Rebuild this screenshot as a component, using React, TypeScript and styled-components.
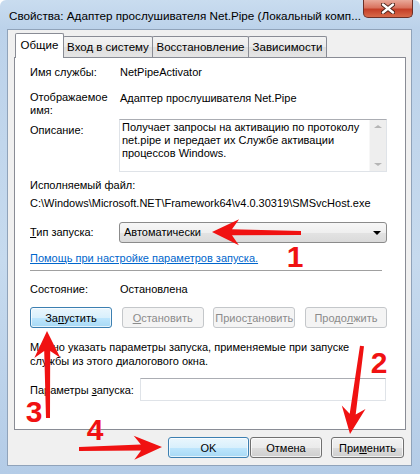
import React from 'react';
import styled, { createGlobalStyle } from 'styled-components';

const GlobalStyle = createGlobalStyle`
  html, body {
    margin: 0;
    padding: 0;
  }
  body {
    width: 420px;
    height: 474px;
    overflow: hidden;
    font-family: 'Liberation Sans', Arial, sans-serif;
    font-size: 11px;
    color: #000;
  }
`;

const Window = styled.div`
  position: relative;
  width: 420px;
  height: 474px;
  box-sizing: border-box;
  padding: 0 8px 8px 7px;
  display: flex;
  flex-direction: column;
  background: linear-gradient(to bottom, #c9dcef 0%, #bcd2ea 28px, #c6daee 55%, #b4cce7 100%);
  border-radius: 6px 6px 0 0;
`;

const TitleBar = styled.div`
  height: 29px;
  display: flex;
  align-items: flex-start;
  justify-content: space-between;
`;

const Title = styled.div`
  margin: 8px 0 0 2px;
  font-size: 11.7px;
  line-height: 15px;
  white-space: nowrap;
`;

const CloseButton = styled.div`
  width: 50px;
  height: 18px;
  margin-right: -1px;
  box-sizing: border-box;
  border: 1px solid #6b3028;
  border-top: none;
  border-radius: 0 0 5px 5px;
  background: linear-gradient(to bottom, #e9a99a 0%, #d9735f 45%, #c43f28 55%, #d86a4a 100%);
  display: flex;
  align-items: center;
  justify-content: center;
`;

const Client = styled.div`
  flex: 1;
  background: #f0f0f0;
  border: 1px solid #90a3ba;
  display: flex;
  flex-direction: column;
  padding: 3px 0 0 6px;
`;

const TabStrip = styled.div`
  position: relative;
  z-index: 1;
  height: 24px;
  display: flex;
  align-items: flex-end;
  padding-left: 1px;
`;

const Tab = styled.div<{ $width: number; $active?: boolean }>`
  width: ${(p) => p.$width}px;
  height: ${(p) => (p.$active ? 25 : 21)}px;
  margin-bottom: ${(p) => (p.$active ? -1 : 0)}px;
  margin-left: -1px;
  box-sizing: border-box;
  border: 1px solid #898c95;
  border-bottom: none;
  border-radius: 2px 2px 0 0;
  background: ${(p) =>
    p.$active ? '#fff' : 'linear-gradient(to bottom, #f3f3f3 0%, #ebebeb 50%, #dedede 51%, #e5e5e5 100%)'};
  position: relative;
  z-index: ${(p) => (p.$active ? 2 : 1)};
  display: flex;
  align-items: center;
  justify-content: center;
  padding-bottom: ${(p) => (p.$active ? 2 : 0)}px;
  font-size: 11.5px;
  white-space: nowrap;
  &:first-child {
    margin-left: 0;
  }
`;

const Panel = styled.div`
  width: 392px;
  height: 373px;
  box-sizing: border-box;
  background: #fff;
  border: 1px solid #898c95;
  padding: 7px 18px 0 15px;
  display: flex;
  flex-direction: column;
`;

const FieldRow = styled.div<{ $top: number; $center?: boolean }>`
  display: grid;
  grid-template-columns: 89px 1fr;
  align-items: ${(p) => (p.$center ? 'center' : 'start')};
  margin-top: ${(p) => p.$top}px;
  line-height: 15px;
`;

const Label = styled.div<{ $lines?: boolean; $offset?: number }>`
  line-height: ${(p) => (p.$lines ? 13 : 15)}px;
  padding-top: ${(p) => p.$offset ?? 0}px;
  white-space: nowrap;
`;

const Value = styled.div`
  padding-left: 1px;
  white-space: nowrap;
`;

const Line = styled.div<{ $top: number; $height?: number }>`
  margin-top: ${(p) => p.$top}px;
  line-height: ${(p) => p.$height ?? 15}px;
  white-space: nowrap;
`;

const TextBox = styled.div`
  height: 53px;
  box-sizing: border-box;
  border: 1px solid #dfe3e8;
  border-top-color: #abadb3;
  display: flex;
`;

const TextBody = styled.div`
  flex: 1;
  padding: 1px 2px;
  line-height: 13px;
  white-space: nowrap;
`;

const ScrollBar = styled.div`
  width: 17px;
  background: #eeeeee;
  border-left: 1px solid #f7f7f7;
  display: flex;
  flex-direction: column;
  justify-content: space-between;
  align-items: center;
  padding: 5px 0;
  box-sizing: border-box;
`;

const ScrollArrow = styled.div<{ $down?: boolean }>`
  width: 0;
  height: 0;
  border-left: 4px solid transparent;
  border-right: 4px solid transparent;
  ${(p) => (p.$down ? 'border-top: 3px solid #b5b5b5;' : 'border-bottom: 3px solid #b5b5b5;')}
`;

const Combo = styled.div`
  height: 21px;
  box-sizing: border-box;
  border: 1px solid #8b8b8b;
  border-radius: 3px;
  background: linear-gradient(to bottom, #f7f7f7 0%, #efefef 50%, #e3e3e3 51%, #dadada 100%);
  display: flex;
  align-items: center;
  justify-content: space-between;
  padding: 0 5px 0 4px;
`;

const ComboArrow = styled.div`
  width: 0;
  height: 0;
  border-left: 4px solid transparent;
  border-right: 4px solid transparent;
  border-top: 4px solid #000;
`;

const Link = styled.a`
  display: block;
  margin-top: 8px;
  line-height: 15px;
  color: #0066cc;
  text-decoration: underline;
  white-space: nowrap;
`;

const Separator = styled.div`
  margin-top: 4px;
  width: 352px;
  height: 1px;
  background: #a0a0a0;
  border-bottom: 1px solid #fff;
`;

const ActionRow = styled.div`
  margin-top: 10px;
  display: flex;
  justify-content: space-between;
`;

const Button = styled.div<{ $width: number; $kind?: 'normal' | 'focus' | 'disabled'; $gap?: number }>`
  width: ${(p) => p.$width}px;
  height: 21px;
  margin-left: ${(p) => p.$gap ?? 0}px;
  box-sizing: border-box;
  border-radius: 3px;
  display: flex;
  align-items: center;
  justify-content: center;
  white-space: nowrap;
  border: 1px solid
    ${(p) => (p.$kind === 'focus' ? '#3c7fb1' : p.$kind === 'disabled' ? '#c4c7ca' : '#707070')};
  color: ${(p) => (p.$kind === 'disabled' ? '#8b8b8b' : '#000')};
  background: ${(p) =>
    p.$kind === 'focus'
      ? 'linear-gradient(to bottom, #eaf6fd 0%, #d9f0fc 50%, #bee6fd 51%, #a7d9f5 100%)'
      : p.$kind === 'disabled'
        ? '#f4f4f4'
        : 'linear-gradient(to bottom, #f2f2f2 0%, #ebebeb 50%, #dddddd 51%, #cfcfcf 100%)'};
  box-shadow: ${(p) => (p.$kind === 'disabled' ? 'none' : 'inset 0 0 0 1px rgba(255,255,255,0.7)')};
`;

const ParamRow = styled.div`
  margin-top: 10px;
  display: flex;
  align-items: center;
`;

const ParamLabel = styled.div`
  width: 110px;
  white-space: nowrap;
`;

const ParamInput = styled.div`
  width: 246px;
  height: 23px;
  box-sizing: border-box;
  border: 1px solid #dfe3e8;
  border-top-color: #abadb3;
  background: #fff;
`;

const ButtonBar = styled.div`
  margin-top: 7px;
  padding-right: 7px;
  display: flex;
  justify-content: flex-end;
`;

const Key = styled.span`
  text-decoration: underline;
`;

const Overlay = styled.svg`
  position: absolute;
  left: 0;
  top: 0;
  pointer-events: none;
  z-index: 10;
`;

const Digit = styled.text`
  font-family: 'Liberation Sans', Arial, sans-serif;
  font-weight: 700;
  font-size: 30px;
  fill: #f01212;
`;

type Arrow = { x1: number; y1: number; x2: number; y2: number; head: number; half: number };

// tapered shaft with a swept-back head, from (x1,y1) to the tip at (x2,y2)
function arrowPoints({ x1, y1, x2, y2, head, half }: Arrow) {
  const dx = x2 - x1;
  const dy = y2 - y1;
  const len = Math.hypot(dx, dy);
  const ux = dx / len;
  const uy = dy / len;
  const nx = -uy;
  const ny = ux;
  const p = (a: number, b: number) => `${(x1 + ux * a + nx * b).toFixed(1)},${(y1 + uy * a + ny * b).toFixed(1)}`;
  const base = len - head;
  const notch = base + 7;
  return [
    p(0, -2),
    p(notch, -3),
    p(base, -half),
    p(len, 0),
    p(base, half),
    p(notch, 3),
    p(0, 2),
  ].join(' ');
}

const arrows: Arrow[] = [
  { x1: 301, y1: 233, x2: 212, y2: 232, head: 27, half: 13 },
  { x1: 362, y1: 346, x2: 350, y2: 434, head: 27, half: 12 },
  { x1: 48, y1: 418, x2: 47, y2: 331, head: 27, half: 13 },
  { x1: 79, y1: 449, x2: 162, y2: 447, head: 28, half: 12 },
];

export default function App() {
  return (
    <>
      <GlobalStyle />
      <Window>
        <TitleBar>
          <Title>Свойства: Адаптер прослушивателя Net.Pipe (Локальный комп...</Title>
          <CloseButton>
            <svg width="14" height="11" viewBox="0 0 14 11">
              <path d="M2 1.5 L12 9.5 M12 1.5 L2 9.5" stroke="#4a2219" strokeWidth="4.2" strokeLinecap="round" />
              <path d="M2 1.5 L12 9.5 M12 1.5 L2 9.5" stroke="#fff" strokeWidth="2.4" strokeLinecap="round" />
            </svg>
          </CloseButton>
        </TitleBar>
        <Client>
          <TabStrip>
            <Tab $width={49} $active>
              Общие
            </Tab>
            <Tab $width={90}>Вход в систему</Tab>
            <Tab $width={97}>Восстановление</Tab>
            <Tab $width={79}>Зависимости</Tab>
          </TabStrip>
          <Panel>
            <FieldRow $top={0}>
              <Label>Имя службы:</Label>
              <Value>NetPipeActivator</Value>
            </FieldRow>
            <FieldRow $top={11}>
              <Label $lines>
                Отображаемое
                <br />
                имя:
              </Label>
              <Value>Адаптер прослушивателя Net.Pipe</Value>
            </FieldRow>
            <FieldRow $top={2}>
              <Label $lines $offset={5}>
                Описание:
              </Label>
              <TextBox>
                <TextBody>
                  Получает запросы на активацию по протоколу
                  <br />
                  net.pipe и передает их Службе активации
                  <br />
                  процессов Windows.
                </TextBody>
                <ScrollBar>
                  <ScrollArrow />
                  <ScrollArrow $down />
                </ScrollBar>
              </TextBox>
            </FieldRow>
            <Line $top={6}>Исполняемый файл:</Line>
            <Line $top={3}>C:\Windows\Microsoft.NET\Framework64\v4.0.30319\SMSvcHost.exe</Line>
            <FieldRow $top={11} $center>
              <Label>
                <Key>Т</Key>ип запуска:
              </Label>
              <Combo>
                <span>Автоматически</span>
                <ComboArrow />
              </Combo>
            </FieldRow>
            <Link>Помощь при настройке параметров запуска.</Link>
            <Separator />
            <FieldRow $top={10}>
              <Label>Состояние:</Label>
              <Value>Остановлена</Value>
            </FieldRow>
            <ActionRow>
              <Button $width={82} $kind="focus">
                За<Key>п</Key>устить
              </Button>
              <Button $width={82} $kind="disabled">
                <Key>О</Key>становить
              </Button>
              <Button $width={82} $kind="disabled">
                Приос<Key>т</Key>ановить
              </Button>
              <Button $width={82} $kind="disabled">
                Продо<Key>л</Key>жить
              </Button>
            </ActionRow>
            <Line $top={12} $height={14}>
              Можно указать параметры запуска, применяемые при запуске
              <br />
              службы из этого диалогового окна.
            </Line>
            <ParamRow>
              <ParamLabel>
                Параметры <Key>з</Key>апуска:
              </ParamLabel>
              <ParamInput />
            </ParamRow>
          </Panel>
          <ButtonBar>
            <Button $width={81} $kind="focus">
              OK
            </Button>
            <Button $width={72} $gap={1}>
              Отмена
            </Button>
            <Button $width={73} $gap={9}>
              При<Key>м</Key>енить
            </Button>
          </ButtonBar>
        </Client>
        <Overlay width="420" height="474" viewBox="0 0 420 474">
          {arrows.map((a, i) => (
            <polygon key={i} points={arrowPoints(a)} fill="#f01212" />
          ))}
          <Digit x="295" y="267" textAnchor="middle">1</Digit>
          <Digit x="379" y="373" textAnchor="middle">2</Digit>
          <Digit x="34" y="422" textAnchor="middle">3</Digit>
          <Digit x="95" y="440" textAnchor="middle">4</Digit>
        </Overlay>
      </Window>
    </>
  );
}
